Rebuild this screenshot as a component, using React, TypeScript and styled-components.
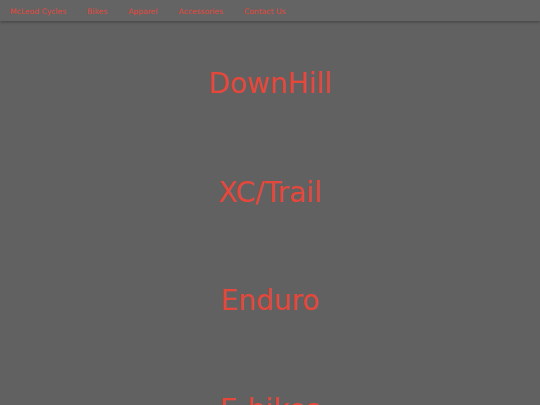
import React from "react";
import styled, { createGlobalStyle } from "styled-components";

const Global = createGlobalStyle`
  html, body { margin: 0; padding: 0; background: #616161; }
  body { font-family: "DejaVu Sans", sans-serif; overflow: hidden; }
`;

const Nav = styled.nav`
  height: 21px;
  background: #646464;
  box-shadow: 0 1px 3px rgba(0,0,0,0.35);
  display: flex;
  align-items: center;
  gap: 21px;
  padding: 1px 10px 0;
  box-sizing: border-box;
  position: relative;
  z-index: 1;
`;

const NavLink = styled.a`
  color: #e0483c;
  font-size: 7.6px;
  text-decoration: none;
  white-space: nowrap;
`;

const Main = styled.main`
  display: flex;
  flex-direction: column;
  align-items: center;
  padding-top: 9px;
`;

const Heading = styled.h1`
  margin: 0;
  font-size: 28px;
  font-weight: normal;
  line-height: 108.5px;
  color: #e5473b;
`;

const links = ["McLeod Cycles", "Bikes", "Apparel", "Accessories", "Contact Us"];
const cats = ["DownHill", "XC/Trail", "Enduro", "E-bikes"];

export default function App() {
  return (
    <>
      <Global />
      <Nav>
        {links.map((l) => (
          <NavLink key={l} href="#">{l}</NavLink>
        ))}
      </Nav>
      <Main>
        {cats.map((c) => (
          <Heading key={c}>{c}</Heading>
        ))}
      </Main>
    </>
  );
}
